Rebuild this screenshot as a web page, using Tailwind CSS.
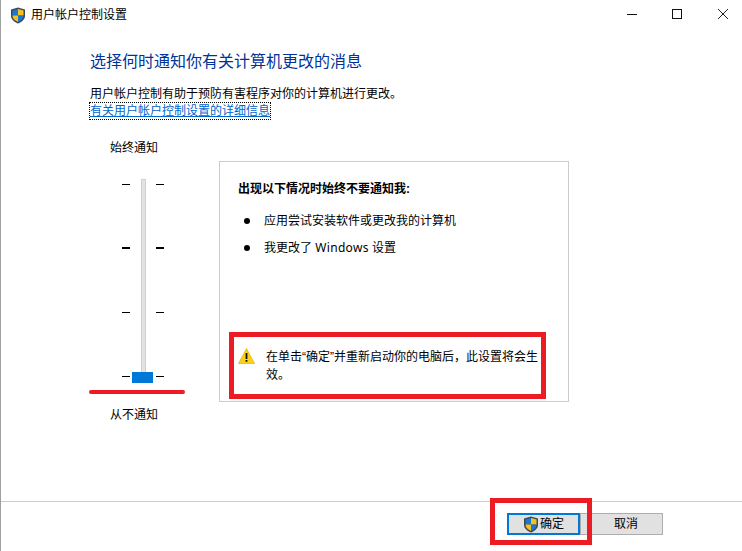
<!DOCTYPE html>
<html lang="zh-CN">
<head>
  <meta charset="UTF-8" />
  <title>用户帐户控制设置</title>
  <script src="https://cdn.jsdelivr.net/npm/@tailwindcss/browser@4"></script>
</head>
<body class="bg-white overflow-hidden">
  <div class="relative w-[742px] h-[551px] bg-white text-black text-[12px] leading-[16px] font-['Liberation_Sans','Noto_Sans_CJK_SC',sans-serif] flex flex-col border-l border-[#a0a0a0]">

    <!-- title bar -->
    <header class="h-[30px] shrink-0 flex items-center pl-[9px]">
      <svg width="16" height="17" viewBox="0 0 16 17" class="shrink-0">
        <path d="M8 0.5 L15 2.5 V9 C15 12.5 11.5 15 8 16.5 C4.5 15 1 12.5 1 9 V2.5 Z" fill="#3a4a5c"/>
        <path d="M8 2 L8 8.5 L2.5 8.5 L2.5 3.6 Z" fill="#1b78d0"/>
        <path d="M8 2 L13.5 3.6 L13.5 8.5 L8 8.5 Z" fill="#f9c11e"/>
        <path d="M2.5 8.5 L8 8.5 L8 15 C5 13.6 2.5 11.6 2.5 8.5 Z" fill="#f9c11e"/>
        <path d="M8 8.5 L13.5 8.5 C13.5 11.6 11 13.6 8 15 Z" fill="#1b78d0"/>
      </svg>
      <span class="ml-[5px]">用户帐户控制设置</span>
      <div class="ml-auto flex items-center pb-[1px]">
        <svg width="11" height="11" viewBox="0 0 11 11" class="mr-[34px]"><path d="M0 5.5 H10" stroke="#111" fill="none"/></svg>
        <svg width="11" height="11" viewBox="0 0 11 11" class="mr-[35px]"><rect x="0.5" y="0.5" width="9" height="9" stroke="#111" fill="none"/></svg>
        <svg width="11" height="11" viewBox="0 0 11 11" class="mr-[13px]"><path d="M0 0 L10 10 M10 0 L0 10" stroke="#222" fill="none"/></svg>
      </div>
    </header>

    <!-- intro -->
    <section class="pl-[89px] pt-[20px]">
      <h1 class="text-[16px] leading-[24px] font-normal text-[#003399]">选择何时通知你有关计算机更改的消息</h1>
      <p class="mt-[12px]">用户帐户控制有助于预防有害程序对你的计算机进行更改。</p>
      <a class="block w-fit mt-[1px] text-[#0066cc] underline outline-1 outline-dotted outline-black">有关用户帐户控制设置的详细信息</a>
    </section>

    <!-- main -->
    <section class="flex mt-[20px] pl-[89px]">
      <!-- slider column -->
      <div class="w-[96px] flex flex-col items-center shrink-0 relative">
        <span class="mt-[1px] -translate-x-[4px]">始终通知</span>
        <div class="relative mt-[23px] w-[96px] h-[204px] shrink-0">
          <div class="absolute left-[51px] top-0 w-[5px] h-[204px] bg-[#e3e3e3] border border-[#d0d0d0]"></div>
          <div class="absolute left-0 top-[5px] w-full h-full flex flex-col">
            <div class="flex h-[63px] pl-[32px] gap-[26px]"><i class="block w-[8px] h-px bg-black"></i><i class="block w-[8px] h-px bg-black"></i></div>
            <div class="flex h-[65px] pl-[32px] gap-[26px]"><i class="block w-[8px] h-[2px] bg-black"></i><i class="block w-[8px] h-[2px] bg-black"></i></div>
            <div class="flex h-[64px] pl-[32px] gap-[26px]"><i class="block w-[8px] h-px bg-black"></i><i class="block w-[8px] h-px bg-black"></i></div>
            <div class="flex pl-[32px] gap-[26px]"><i class="block w-[8px] h-px bg-black"></i><i class="block w-[8px] h-px bg-black"></i></div>
          </div>
          <div class="absolute left-[42px] top-[193px] w-[21px] h-[11px] bg-[#0078d7]"></div>
        </div>
        <span class="mt-[24px] -translate-x-[4px]">从不通知</span>
      </div>

      <!-- info panel -->
      <div class="ml-[33px] mt-[22px] w-[350px] h-[241px] border border-[#cccccc] flex flex-col pl-[18px] pr-[18px] pt-[19px]">
        <strong class="font-bold">出现以下情况时始终不要通知我:</strong>
        <ul class="mt-[16px] flex flex-col gap-[11px]">
          <li class="flex items-center h-[16px]"><i class="block w-[6px] h-[6px] rounded-full bg-black ml-[6px] mr-[14px]"></i>应用尝试安装软件或更改我的计算机</li>
          <li class="flex items-center h-[16px]"><i class="block w-[6px] h-[6px] rounded-full bg-black ml-[6px] mr-[14px]"></i><span>我更改了 <span class="tracking-[0.3px] font-['Noto_Sans','Liberation_Sans',sans-serif]">Windows</span> 设置</span></li>
        </ul>
        <div class="flex mt-[92px]">
          <svg width="17" height="16" viewBox="0 0 17 16" class="shrink-0">
            <path d="M8.5 0.5 L16.5 15.5 H0.5 Z" fill="#fcd116" stroke="#d9a400" stroke-width="0.6"/>
            <rect x="7.6" y="5" width="1.8" height="6" fill="#111"/>
            <rect x="7.6" y="12" width="1.8" height="1.8" fill="#111"/>
          </svg>
          <p class="ml-[11px] w-[280px] leading-[18px]">在单击“确定”并重新启动你的电脑后，此设置将会生效。</p>
        </div>
      </div>
    </section>

    <!-- footer -->
    <footer class="absolute left-0 right-0 top-[501px] border-t border-[#cccccc] h-[50px] flex justify-end items-start pt-[11px] pr-[79px]">
      <button class="w-[73px] h-[22px] bg-[#e1e1e1] border-2 border-[#0078d7] flex items-center justify-center">
        <svg width="16" height="17" viewBox="0 0 16 17" class="shrink-0">
          <path d="M8 0.5 L15 2.5 V9 C15 12.5 11.5 15 8 16.5 C4.5 15 1 12.5 1 9 V2.5 Z" fill="#3a4a5c"/>
          <path d="M8 2 L8 8.5 L2.5 8.5 L2.5 3.6 Z" fill="#1b78d0"/>
          <path d="M8 2 L13.5 3.6 L13.5 8.5 L8 8.5 Z" fill="#f9c11e"/>
          <path d="M2.5 8.5 L8 8.5 L8 15 C5 13.6 2.5 11.6 2.5 8.5 Z" fill="#f9c11e"/>
          <path d="M8 8.5 L13.5 8.5 C13.5 11.6 11 13.6 8 15 Z" fill="#1b78d0"/>
        </svg>
        <span class="ml-[1px]">确定</span>
      </button>
      <button class="w-[83px] h-[22px] pl-[9px] bg-[#e1e1e1] border border-[#adadad]">取消</button>
    </footer>

    <!-- red annotations drawn on top of the screenshot -->
    <div class="absolute left-[88px] top-[390px] w-[96px] h-[4px] rounded-full bg-[#ed1c24]"></div>
    <div class="absolute left-[228px] top-[332px] w-[317px] h-[67px] border-[5px] border-[#ed1c24]"></div>
    <div class="absolute left-[489px] top-[498px] w-[102px] h-[47px] border-[5px] border-[#ed1c24]"></div>
  </div>
</body>
</html>
